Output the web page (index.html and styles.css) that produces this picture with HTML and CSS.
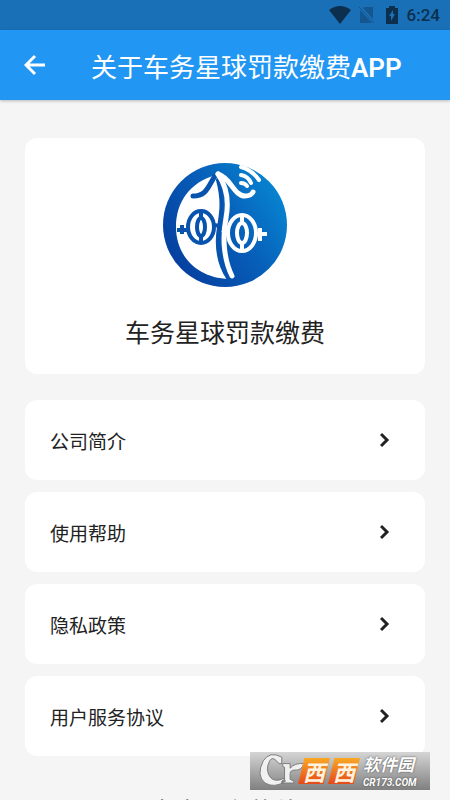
FILE: index.html
```html
<!DOCTYPE html>
<html lang="zh-CN">
<head>
    <meta charset="UTF-8">
    <meta name="viewport" content="width=device-width, initial-scale=1.0">
    <title>关于车务星球罚款缴费APP</title>
    <link rel="stylesheet" href="styles.css">
</head>
<body>
    <!-- Android status bar -->
    <div class="status-bar">
        <svg class="status-wifi" viewBox="0 0 22 18"><path d="M0 4Q11-4 22 4L11 18z"/></svg>
        <svg class="status-sim" viewBox="0 0 16 18"><path d="M5 1h9v12L4 2zM1 4l12 13H1z"/><path d="M0 1l15 16" stroke="currentColor" fill="none"/></svg>
        <svg class="status-battery" viewBox="0 0 12 18"><path fill-rule="evenodd" d="M3 2V0h6v2h3v16H0V2zM7 4L3 10h2v5l4-7H7z"/></svg>
        <span class="status-time">6:24</span>
    </div>

    <!-- Title bar -->
    <header class="app-bar">
        <button class="back" type="button" aria-label="返回">
            <svg viewBox="0 0 22 22"><path d="M11 2l-9 9 9 9M2 11h19"/></svg>
        </button>
        <h1 class="app-title">关于车务星球罚款缴费<b>APP</b></h1>
    </header>

    <main class="content">
        <!-- Logo and app name -->
        <section class="card about">
            <svg class="logo" viewBox="0 0 126 126" aria-hidden="true">
                <defs>
                    <linearGradient id="sky" x1="1" y1="0.2" x2="0.1" y2="0.8">
                        <stop offset="0" stop-color="#0789d4"/>
                        <stop offset="0.5" stop-color="#075eb8"/>
                        <stop offset="1" stop-color="#0640a0"/>
                    </linearGradient>
                </defs>
                <circle cx="63" cy="63" r="62" fill="url(#sky)"/>
                <path d="M54 13C28 20 14 40 14 65C14 94 35 116 67 117C53 92 54 74 58 54C60 38 57 22 54 13z" fill="#fff"/>
                <g fill="none" stroke-linecap="round">
                    <path d="M53 14C46 24 45 34 31 34" stroke="#0753ad" stroke-width="5"/>
                    <path d="M56 18C61 37 60 48 57 65C54 84 57 102 66 116" stroke="#0753ad" stroke-width="4"/>
                    <path d="M56 12C65 25 67 40 64 56C60 76 62 98 70 114" stroke="#fff" stroke-width="5"/>
                    <path d="M56 12C69 16 72 34 83 34Q89 34 91 30" stroke="#fff" stroke-width="5"/>
                    <path d="M79 5Q90 8 97 18M79 13Q86 14 89 21M79 21Q83 21 85 24" stroke="#fff" stroke-width="4"/>
                </g>
                <g fill="none" stroke="#0753ad">
                    <ellipse cx="39" cy="65" rx="13" ry="16" stroke-width="4"/>
                    <ellipse cx="39" cy="65" rx="4" ry="9" stroke-width="4"/>
                    <path d="M39 48v9M39 73v9M15 68h12M20 63v9M51 63l8 1" stroke-width="4"/>
                </g>
                <g fill="none" stroke="#fff">
                    <ellipse cx="80" cy="71" rx="14" ry="18" stroke-width="4"/>
                    <ellipse cx="80" cy="71" rx="5" ry="10" stroke-width="4"/>
                    <path d="M80 52v10M80 80v10M60 68l7 2M94 72h11M98 66v13" stroke-width="4"/>
                </g>
            </svg>
            <h2 class="app-name">车务星球罚款缴费</h2>
        </section>

        <!-- Menu entries -->
        <nav class="menu">
            <a class="card menu-item" href="#">公司简介<svg class="arrow" viewBox="0 0 10 16"><path d="M1 2l6 6-6 6"/></svg></a>
            <a class="card menu-item" href="#">使用帮助<svg class="arrow" viewBox="0 0 10 16"><path d="M1 2l6 6-6 6"/></svg></a>
            <a class="card menu-item" href="#">隐私政策<svg class="arrow" viewBox="0 0 10 16"><path d="M1 2l6 6-6 6"/></svg></a>
            <a class="card menu-item" href="#">用户服务协议<svg class="arrow" viewBox="0 0 10 16"><path d="M1 2l6 6-6 6"/></svg></a>
        </nav>

        <p class="service">客户服务热线</p>
    </main>

    <!-- Site watermark over the page corner -->
    <div class="watermark">
        <svg class="watermark-logo" viewBox="0 0 54 38" aria-hidden="true">
            <path d="M30 4Q17-3 10 8Q2 24 12 32Q22 38 34 30L32 27Q22 32 17 25Q12 17 17 8Q20 2 27 11L30 11zM31 11h8v5q5-6 15-5q-3 8-10 7q-5 0-5 4v6l4 2v2H30v-2l3-2V15l-2-1z"/>
        </svg>
        <span class="watermark-name"><span>西</span><span>西</span></span>
        <span class="watermark-site">
            <span class="watermark-cn">软件园</span>
            <span class="watermark-url">CR173.COM</span>
        </span>
    </div>
</body>
</html>
```

FILE: styles.css
```css
/* Page layout */
* {
    box-sizing: border-box;
}

body {
    margin: 0;
    height: 100vh;
    overflow: hidden;
    background-color: #f5f5f5;
    color: #222;
    font-family: Roboto, "Noto Sans CJK SC", sans-serif;
}

/* Status bar */
.status-bar {
    display: flex;
    justify-content: flex-end;
    align-items: center;
    height: 30px;
    padding-right: 10px;
    background-color: #1a70b7;
    color: #0b2f4d;
}

.status-bar svg {
    height: 18px;
    fill: currentColor;
}

.status-wifi {
    width: 22px;
    margin-right: 8px;
}

.status-sim {
    width: 16px;
    margin-right: 11px;
    color: #145790;
}

.status-battery {
    width: 12px;
    margin-right: 9px;
}

.status-time {
    font-size: 17px;
    font-weight: 500;
}

/* Title bar */
.app-bar {
    display: flex;
    align-items: center;
    height: 70px;
    padding: 0 24px;
    background-color: #2196f3;
    box-shadow: 0 1px 3px rgba(0, 0, 0, 0.25);
    color: white;
}

.back {
    display: flex;
    margin-right: 45px;
    padding: 0;
    border: none;
    background: none;
    color: inherit;
    cursor: pointer;
}

.back svg {
    width: 22px;
    height: 22px;
    fill: none;
    stroke: currentColor;
    stroke-width: 3;
}

.app-title {
    margin: 0;
    font-size: 26px;
    font-weight: 400;
    white-space: nowrap;
}

.app-title b {
    font-weight: 600;
}

/* Cards */
.content {
    padding: 38px 25px 0;
}

.card {
    border-radius: 12px;
    background-color: white;
}

.about {
    display: flex;
    flex-direction: column;
    align-items: center;
    padding: 24px 20px 22px;
}

.logo {
    width: 126px;
    height: 126px;
}

.app-name {
    margin: 28px 0 0;
    font-size: 25px;
    font-weight: 400;
    line-height: 36px;
}

/* Menu entries */
.menu {
    display: flex;
    flex-direction: column;
    gap: 12px;
    margin-top: 26px;
}

.menu-item {
    display: flex;
    justify-content: space-between;
    align-items: center;
    height: 80px;
    padding: 0 35px 0 25px;
    color: inherit;
    font-size: 19px;
    text-decoration: none;
}

.arrow {
    width: 10px;
    height: 16px;
    fill: none;
    stroke: currentColor;
    stroke-width: 3;
}

.service {
    margin: 39px 0 0;
    font-size: 25px;
    line-height: 36px;
    text-align: center;
}

/* Watermark */
.watermark {
    position: absolute;
    right: 20px;
    bottom: 10px;
    display: flex;
    align-items: center;
    width: 180px;
    height: 38px;
    padding-left: 4px;
    background: linear-gradient(#d5d5d5, #808080);
    font-family: "Noto Sans CJK SC", sans-serif;
}

.watermark-logo {
    flex: none;
    width: 50px;
    height: 36px;
    fill: #f0f0f0;
    stroke: #777;
}

.watermark-name {
    display: flex;
    flex: none;
    margin-left: -6px;
    color: #fff3e0;
    font-size: 22px;
    font-style: italic;
    font-weight: 700;
    line-height: 26px;
}

.watermark-name span {
    width: 32px;
    margin-right: -2px;
    background: linear-gradient(#f9a825, #e64a19);
    clip-path: polygon(20% 0, 100% 0, 80% 100%, 0 100%);
    text-align: center;
}

.watermark-site {
    display: flex;
    flex-direction: column;
    margin-left: 5px;
    color: white;
    font-style: italic;
    font-weight: 700;
    text-shadow: 0 0 2px #444;
}

.watermark-cn {
    font-size: 17px;
    line-height: 20px;
}

.watermark-url {
    margin-top: 4px;
    font-family: Roboto, sans-serif;
    font-size: 10px;
    line-height: 10px;
}
```
